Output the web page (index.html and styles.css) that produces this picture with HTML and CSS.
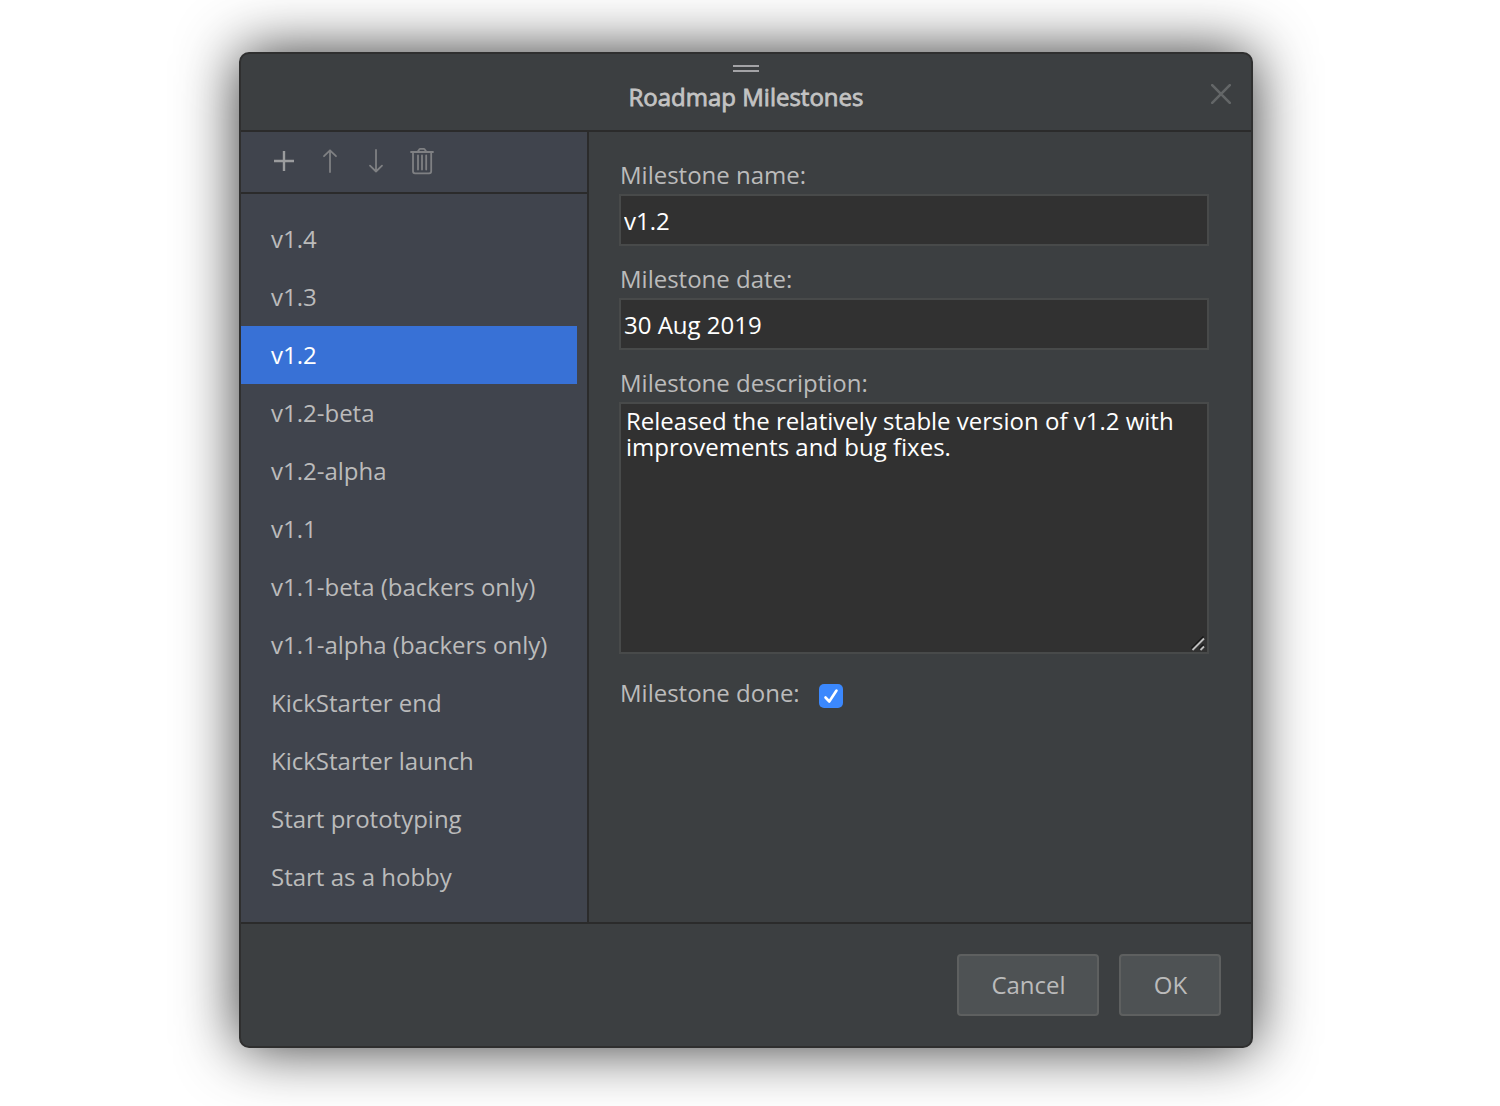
FILE: index.html
```html
<!DOCTYPE html>
<html lang="en">
<head>
<meta charset="utf-8">
<title>Roadmap Milestones</title>
<link rel="stylesheet" href="styles.css">
</head>
<body>
<section class="dialog">
  <header class="dialog-header">
    <span class="drag-handle"></span>
    <h1 class="dialog-title">Roadmap Milestones</h1>
    <svg class="close" width="20" height="20" viewBox="0 0 20 20"><path d="M1.200 1.200 18.800 18.800M18.800 1.200 1.200 18.800"/></svg>
  </header>
  <div class="dialog-body">
    <aside class="sidebar">
      <div class="toolbar">
        <svg class="tool tool-active" width="26" height="28" viewBox="0 0 26 28"><path d="M13 4v20M3 14h20"/></svg>
        <svg class="tool" width="26" height="28" viewBox="0 0 26 28"><path d="M13 25V3.500M7 9.200l6-5.900 6 5.900"/></svg>
        <svg class="tool" width="26" height="28" viewBox="0 0 26 28"><path d="M13 3v21.500M7 18.600l6 5.900 6-5.900"/></svg>
        <svg class="tool" width="26" height="28" viewBox="0 0 26 28"><path d="M2 5h22M4 5v19.300a2 2 0 0 0 2 2h14.200a2 2 0 0 0 2-2V5M8.500 5l1.700-2.500q.4-.7 1.200-.7h3.200q.8 0 1.200.7L17.500 5M9 8.500v14M13 8.500v14M17.200 8.500v14"/></svg>
      </div>
      <ul class="milestones">
        <li>v1.4</li>
        <li>v1.3</li>
        <li class="selected">v1.2</li>
        <li>v1.2-beta</li>
        <li>v1.2-alpha</li>
        <li>v1.1</li>
        <li>v1.1-beta (backers only)</li>
        <li>v1.1-alpha (backers only)</li>
        <li>KickStarter end</li>
        <li>KickStarter launch</li>
        <li>Start prototyping</li>
        <li>Start as a hobby</li>
      </ul>
    </aside>
    <form class="details">
      <label for="name">Milestone name:</label>
      <input class="text-field" id="name" type="text" value="v1.2">
      <label for="date">Milestone date:</label>
      <input class="text-field" id="date" type="text" value="30 Aug 2019">
      <label for="description">Milestone description:</label>
      <div class="description">
        <textarea class="text-area" id="description" spellcheck="false">Released the relatively stable version of v1.2 with improvements and bug fixes.</textarea>
        <svg class="grip" width="16" height="16" viewBox="0 0 16 16"><g class="grip-dark"><path d="M1.500 13.500l12-12M9.500 13.500l4-4"/></g><g class="grip-light"><path d="M2.500 15l11.500-11.500M10.500 15l3.500-3.500"/></g></svg>
      </div>
      <div class="done-row">
        <label for="done">Milestone done:</label>
        <span class="checkbox" id="done"><svg width="24" height="24" viewBox="0 0 24 24"><path d="M6.500 13.500 10.300 17.500 17.500 6.500"/></svg></span>
      </div>
    </form>
  </div>
  <footer class="dialog-footer">
    <button class="button cancel">Cancel</button>
    <button class="button ok">OK</button>
  </footer>
</section>
</body>
</html>
```
FILE: styles.css
```css
* { box-sizing: border-box; }
body {
  margin: 0;
  height: 1106px;
  padding: 52px 0 0 239px;
  overflow: hidden;
  background: #fff;
  color: #bbb;
  font: 24px/32px "Open Sans", sans-serif;
}
.dialog {
  display: flex;
  flex-direction: column;
  width: 1014px;
  height: 996px;
  border: 2px solid #2f2f2f;
  border-radius: 10px;
  background: #3c3f41;
  box-shadow: 0 0 60px rgba(0, 0, 0, .8);
  overflow: hidden;
}
.dialog-header {
  position: relative;
  display: flex;
  flex-direction: column;
  align-items: center;
  height: 78px;
  padding-top: 11px;
  border-bottom: 2px solid #2b2b2b;
}
.drag-handle {
  width: 26px;
  height: 7px;
  border: solid #a3a3a6;
  border-width: 2px 0;
}
.dialog-title {
  margin: 9px 0 0;
  font-size: 24px;
  font-weight: 400;
  line-height: 32px;
  color: #c3c3c3;
  -webkit-text-stroke: .8px #c3c3c3;
}
.close {
  position: absolute;
  top: 30px;
  right: 20px;
  fill: none;
  stroke: #636667;
  stroke-width: 2.6;
  stroke-linecap: round;
}
.dialog-body { display: flex; height: 792px; border-bottom: 2px solid #2b2b2b; }
.sidebar { width: 348px; border-right: 2px solid #2b2b2b; background: #40444d; }
.toolbar {
  display: flex;
  align-items: center;
  gap: 20px;
  height: 62px;
  padding: 0 0 2px 30px;
  border-bottom: 2px solid #2b2b2b;
}
.tool { fill: none; stroke: #7f8083; stroke-width: 1.8; stroke-linecap: round; stroke-linejoin: round; }
.tool-active { stroke: #9b9c9e; stroke-width: 2.4; stroke-linecap: butt; }
.milestones { margin: 0; padding: 16px 10px 0 0; list-style: none; }
.milestones li { height: 58px; padding-left: 30px; line-height: 58px; white-space: nowrap; }
.milestones .selected { background: #3871d6; color: #fff; }
.details { flex: 1; padding: 28px 42px 0 30px; }
.details > label { display: block; height: 34px; padding-left: 1px; line-height: 30px; }
.text-field, .text-area {
  display: block;
  width: 590px;
  margin: 0;
  border: 2px solid #484a4a;
  border-radius: 0;
  outline: 0;
  background: #313131;
  color: #fff;
  font: inherit;
}
.text-field { height: 52px; margin-bottom: 18px; padding: 0 2px 0 3px; }
.description { position: relative; width: 590px; }
.text-area { height: 252px; padding: 4px 4px 4px 5px; line-height: 26px; resize: none; overflow: hidden; }
.grip { position: absolute; right: 3px; bottom: 3px; fill: none; }
.grip-dark { stroke: #171717; stroke-width: 1.6; }
.grip-light { stroke: #bdbdbd; stroke-width: 1.8; }
.done-row { display: flex; gap: 19px; padding: 23px 0 0 1px; }
.checkbox { width: 24px; height: 24px; margin-top: 7px; border-radius: 5px; background: #3b88fd; }
.checkbox svg { display: block; fill: none; stroke: #fff; stroke-width: 2.6; stroke-linecap: round; stroke-linejoin: round; }
.dialog-footer { display: flex; justify-content: flex-end; gap: 20px; padding: 30px 30px 0 0; }
.button {
  height: 62px;
  padding: 0 0 0 1px;
  border: 2px solid #5e6060;
  border-radius: 4px;
  background: #4e5254;
  color: #bbb;
  font: inherit;
}
.cancel { width: 142px; }
.ok { width: 102px; }
```
